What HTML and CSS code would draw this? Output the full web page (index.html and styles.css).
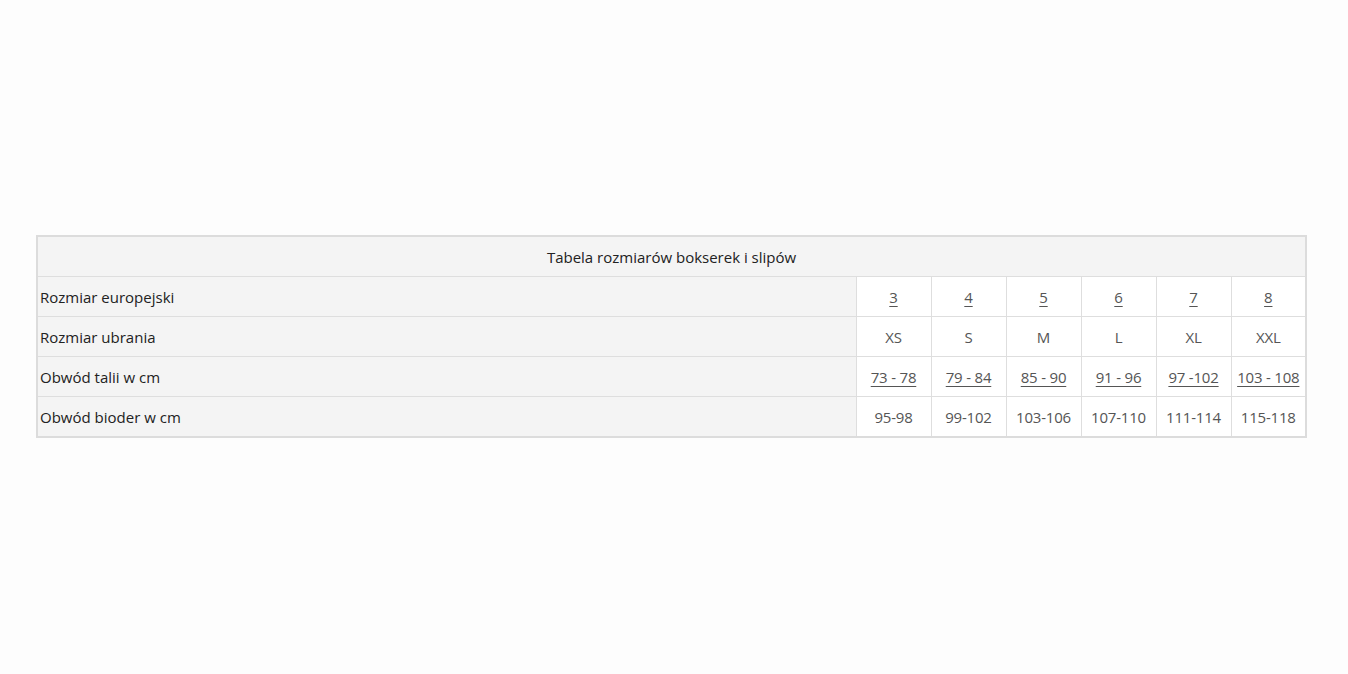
FILE: index.html
```html
<!DOCTYPE html>
<html lang="pl">
<head>
    <meta charset="UTF-8">
    <meta name="viewport" content="width=device-width, initial-scale=1.0">
    <title>Tabela rozmiarów</title>
    <link rel="stylesheet" href="styles.css">
</head>
<body>
    <div class="wrap">
        <table class="sizes">
            <colgroup>
                <col class="col-label">
                <col class="col-size">
                <col class="col-size">
                <col class="col-size">
                <col class="col-size">
                <col class="col-size">
                <col class="col-size">
            </colgroup>
            <tr>
                <th colspan="7">Tabela rozmiarów bokserek i slipów</th>
            </tr>
            <tr>
                <td class="label">Rozmiar europejski</td>
                <td><u>3</u></td>
                <td><u>4</u></td>
                <td><u>5</u></td>
                <td><u>6</u></td>
                <td><u>7</u></td>
                <td><u>8</u></td>
            </tr>
            <tr>
                <td class="label">Rozmiar ubrania</td>
                <td>XS</td>
                <td>S</td>
                <td>M</td>
                <td>L</td>
                <td>XL</td>
                <td>XXL</td>
            </tr>
            <tr>
                <td class="label">Obwód talii w cm</td>
                <td><u>73 - 78</u></td>
                <td><u>79 - 84</u></td>
                <td><u>85 - 90</u></td>
                <td><u>91 - 96</u></td>
                <td><u>97 -102</u></td>
                <td><u>103 - 108</u></td>
            </tr>
            <tr>
                <td class="label">Obwód bioder w cm</td>
                <td>95-98</td>
                <td>99-102</td>
                <td>103-106</td>
                <td>107-110</td>
                <td>111-114</td>
                <td>115-118</td>
            </tr>
        </table>
    </div>
</body>
</html>
```

FILE: styles.css
```css
body {
    margin: 0;
    background: #fdfdfd;
    font-family: "Open Sans", Arial, sans-serif;
    color: #333;
}
.wrap {
    padding: 235px 40px 0 36px;
}
.sizes {
    width: 1271px;
    border-collapse: collapse;
    border: 2px solid #dcdcdc;
    table-layout: fixed;
}
.col-label {
    width: 819px;
}
.col-size {
    width: 75px;
}
.sizes th {
    height: 39px;
    padding: 0;
    background: #f4f4f4;
    font-weight: 500;
    font-size: 15px;
    color: #222;
    border: 1px solid #dedede;
}
.sizes td {
    height: 39px;
    padding: 0;
    text-align: center;
    font-size: 15px;
    letter-spacing: -0.2px;
    white-space: nowrap;
    color: #555;
    background: #fff;
    border: 1px solid #dedede;
}
.sizes td.label {
    padding-left: 2px;
    text-align: left;
    letter-spacing: 0;
    font-weight: 500;
    background: #f4f4f4;
    color: #222;
}
.sizes u {
    text-underline-offset: 3px;
}
```
